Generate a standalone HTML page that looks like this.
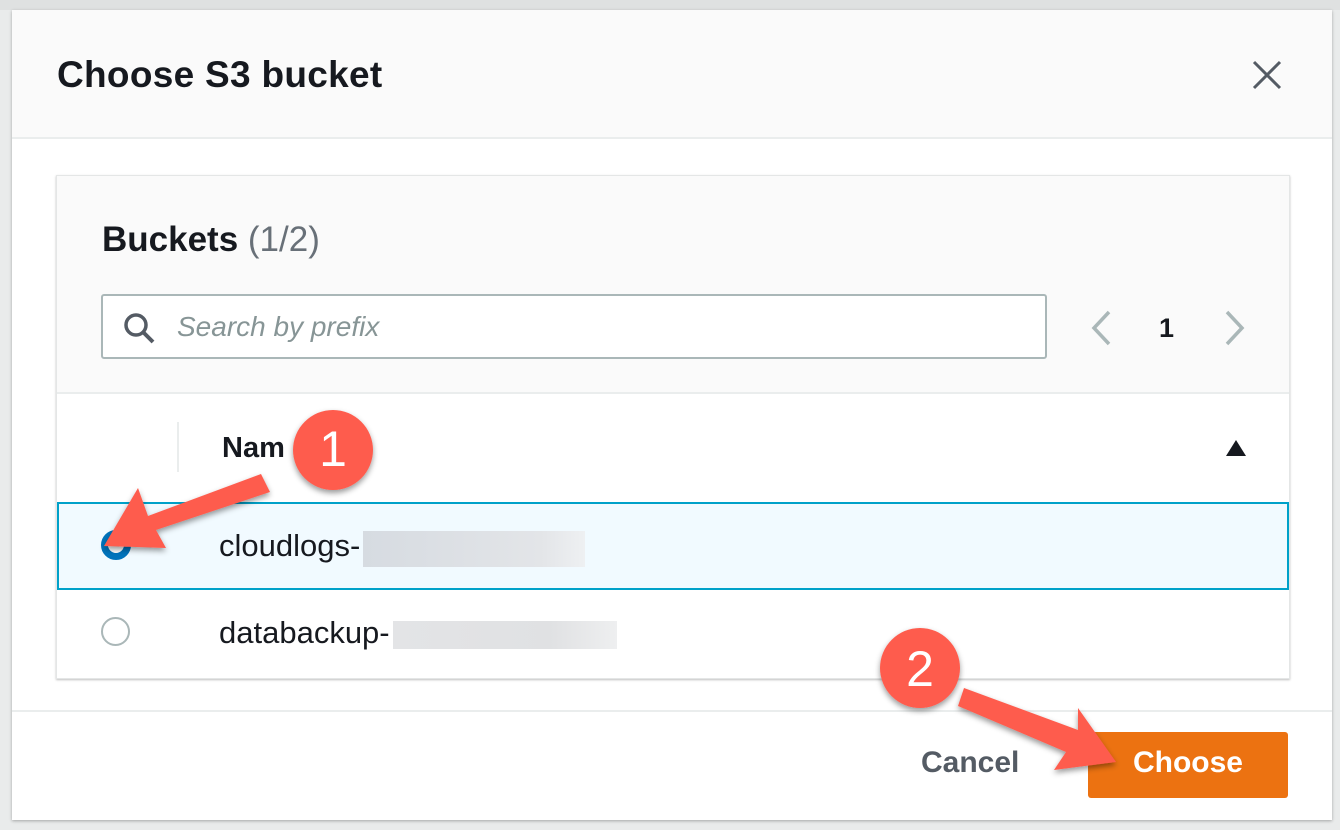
<!DOCTYPE html>
<html><head><style>
body{margin:0;width:1340px;height:830px;background:#e9ebeb;font-family:"Liberation Sans",sans-serif;position:relative;overflow:hidden}
.abs{position:absolute}
.modal{left:12px;top:10px;width:1320px;height:810px;background:#fff;box-shadow:0 1px 3px rgba(0,0,0,.3)}
.hdr{left:0;top:0;width:1320px;height:127px;background:#fafafa;border-bottom:2px solid #eaeded}
.card{left:44px;top:165px;width:1232px;height:502px;background:#fff;border:1px solid #e4e6e6;box-shadow:0 1px 2px rgba(0,0,0,.25)}
</style></head><body>
<div class="abs" style="left:0;top:0;width:1340px;height:10px;background:#dfe1e1"></div>
<div class="abs modal">
 <div class="abs hdr"></div>
 <div class="abs" style="left:45px;top:44px;font-size:37px;font-weight:bold;color:#16191f;letter-spacing:0.3px">Choose S3 bucket</div>
 <svg class="abs" style="left:1240px;top:50px" width="30" height="30"><path d="M2 2L28 28M28 2L2 28" stroke="#545b64" stroke-width="3"/></svg>
 <div class="abs card">
  <div class="abs" style="left:0;top:0;width:1232px;height:216px;background:#fafafa;border-bottom:2px solid #eaeded"></div>
  <div class="abs" style="left:45px;top:44px;font-size:35px;font-weight:bold;color:#16191f">Buckets <span style="font-weight:normal;color:#687078">(1/2)</span></div>
  <div class="abs" style="left:44px;top:118px;width:942px;height:61px;border:2px solid #aab7b8;border-radius:3px;background:#fff"></div>
  <svg class="abs" style="left:66px;top:136px" width="34" height="34"><circle cx="13" cy="13" r="10" fill="none" stroke="#545b64" stroke-width="3.5"/><path d="M20 20L30 30" stroke="#545b64" stroke-width="4"/></svg>
  <div class="abs" style="left:120px;top:135px;font-size:28px;font-style:italic;color:#879596">Search by prefix</div>
  <svg class="abs" style="left:1032px;top:134px" width="160" height="36"><path d="M20 2L5 18L20 34" fill="none" stroke="#aab7b8" stroke-width="3.5"/><path d="M138 2L153 18L138 34" fill="none" stroke="#aab7b8" stroke-width="3.5"/></svg>
  <div class="abs" style="left:1102px;top:137px;font-size:27px;font-weight:bold;color:#16191f">1</div>
  <div class="abs" style="left:120px;top:246px;width:2px;height:50px;background:#eaeded"></div>
  <div class="abs" style="left:165px;top:256px;font-size:29px;font-weight:bold;color:#16191f">Nam</div>
  <svg class="abs" style="left:1167px;top:262px" width="24" height="20"><path d="M12 2L22 18H2Z" fill="#16191f"/></svg>
  <div class="abs" style="left:0;top:326px;width:1228px;height:84px;background:#f1faff;border:2px solid #00a1c9"></div>
  <div class="abs" style="left:44px;top:354px;width:16px;height:16px;border:7px solid #0073bb;border-radius:50%;background:#fff"></div>
  <div class="abs" style="left:162px;top:352px;font-size:31px;color:#16191f">cloudlogs-</div>
  <div class="abs" style="left:306px;top:355px;width:222px;height:36px;background:linear-gradient(90deg,#d6dbe1,#e3e5e8 80%,#eef0f2)"></div>
  <div class="abs" style="left:44px;top:441px;width:25px;height:25px;border:2px solid #aab7b8;border-radius:50%"></div>
  <div class="abs" style="left:162px;top:439px;font-size:31px;color:#16191f">databackup-</div>
  <div class="abs" style="left:336px;top:445px;width:224px;height:28px;background:linear-gradient(90deg,#e3e4e6,#e0e1e3 70%,#eeeff0)"></div>
 </div>
 <div class="abs" style="left:0;top:700px;width:1320px;height:2px;background:#eaeded"></div>
 <div class="abs" style="left:909px;top:736px;font-size:30px;font-weight:bold;color:#545b64">Cancel</div>
 <div class="abs" style="left:1076px;top:722px;width:200px;height:66px;background:#ec7211;border-radius:3px"></div>
 <div class="abs" style="left:1076px;top:736px;width:200px;text-align:center;font-size:30px;font-weight:bold;color:#fff">Choose</div>
</div>
<svg class="abs" style="left:0;top:0" width="1340" height="830">
 <defs><filter id="s"><feDropShadow dx="0" dy="3" stdDeviation="3" flood-opacity=".4"/></filter></defs>
 <g filter="url(#s)" fill="#fe5b4d">
  <path d="M261 474L148 516L138 488L104 546L166 548L156 530L270 492Z"/>
  <circle cx="333" cy="450" r="40"/>
  <path d="M964 688L1078 730L1078 708L1116 762L1054 770L1066 752L958 706Z"/>
  <circle cx="920" cy="668" r="40"/>
 </g>
</svg>
<div class="abs" style="left:313px;top:420px;width:40px;text-align:center;font-size:50px;color:#fff">1</div>
<div class="abs" style="left:900px;top:640px;width:40px;text-align:center;font-size:50px;color:#fff">2</div>
</body></html>
